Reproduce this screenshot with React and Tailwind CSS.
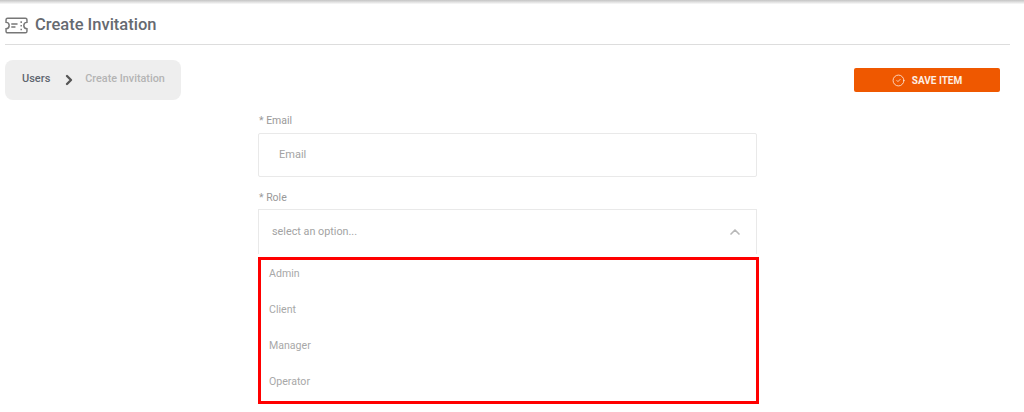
import React from 'react';
import { ChevronUp, ChevronRight, CircleCheck } from 'lucide-react';

const roles = ['Admin', 'Client', 'Manager', 'Operator'];

const TicketIcon = () => (
  <svg width="23" height="17" viewBox="0 0 22 16" fill="none" stroke="#777777" strokeWidth="1.4">
    <path d="M2.5 1h17a1.5 1.5 0 0 1 1.5 1.5V5a3 3 0 0 0 0 6v2.5a1.5 1.5 0 0 1-1.5 1.5h-17A1.5 1.5 0 0 1 1 13.500V11a3 3 0 0 0 0-6V2.500A1.500 1.500 0 0 1 2.500 1z" />
    <path d="M6 6.500h6M6 9.500h4M15.500 4v1.500M15.500 7.500v1.500M15.500 11v1.500" />
  </svg>
);

const App = () => {
  return (
    <div className="h-[412px] w-[1024px] overflow-hidden bg-white font-['Roboto',sans-serif]">
      <div className="h-[4px] bg-gradient-to-b from-[#c4c4c4] to-[#fafafa]" />

      {/* page title */}
      <div className="ml-[5px] mr-[14px] flex h-[41px] items-center gap-[7px] border-b border-[#dddddd] pt-[3px]">
        <TicketIcon />
        <h1 className="text-[16.5px] font-medium text-[#666a70]">Create Invitation</h1>
      </div>

      <div className="mt-[15px] flex items-start justify-between pl-[5px] pr-[24px]">
        <div className="flex h-10 w-[176px] items-start rounded-lg bg-[#eeeeee] pl-[17px] pt-[11px] text-[11px]">
          <span className="font-medium text-[#5f6670]">Users</span>
          <ChevronRight size={16} strokeWidth={3.5} className="ml-[11px] mt-[1px] text-[#555555]" />
          <span className="ml-[8px] text-[10.8px] font-medium text-[#b4b4b4]">Create Invitation</span>
        </div>
        <button className="mt-2 flex h-6 w-[146px] items-center justify-center gap-[7px] rounded-[2px] bg-[#ef5800] text-[10px] font-bold text-[#fdeee5]">
          <CircleCheck size={13} strokeWidth={1.5} />
          SAVE ITEM
        </button>
      </div>

      {/* form */}
      <div className="ml-[258px] mt-[13px] w-[501px]">
        <div className="h-[20px] pl-[1px] text-[10.5px] leading-[15px] text-[#999999]">* Email</div>
        <div className="flex h-[44px] w-[499px] items-center rounded-[2px] border border-[#e9e9e9] pl-[20px] text-[11px] text-[#a3a3a3]">Email</div>
        <div className="mt-[13px] h-[19px] pl-[1px] text-[10.5px] leading-[15px] text-[#999999]">* Role</div>
        <div className="flex h-[45px] w-[499px] items-center justify-between border-x border-t border-[#e9e9e9] pl-[13px] pr-[13px] text-[10.8px] text-[#a3a3a3]">
          select an option...
          <ChevronUp size={16} strokeWidth={2.5} className="text-[#b8b8b8]" />
        </div>
        <ul className="mt-[3px] h-[147px] border-[3px] border-[#ff0000] pl-2">
          {roles.map((role) => (
            <li key={role} className="h-[36px] text-[10.6px] leading-[28px] text-[#a8a8a8]">{role}</li>
          ))}
        </ul>
      </div>
    </div>
  );
};

export default App;
